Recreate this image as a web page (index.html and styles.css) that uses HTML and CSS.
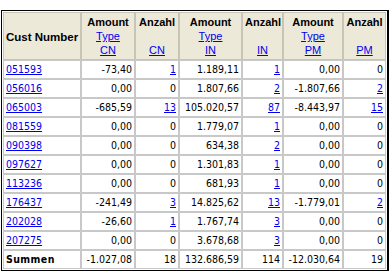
FILE: index.html
```html
<!DOCTYPE html>
<html>
<head>
<meta charset="utf-8">
<link rel="stylesheet" href="styles.css">
</head>
<body>
<div class="frame">
<table class="grid">
<colgroup>
<col class="c1"><col class="c2"><col class="c3"><col class="c4"><col class="c5"><col class="c6"><col class="c7">
</colgroup>
<thead>
<tr>
<th class="h-left">Cust Number</th>
<th>Amount<br><a href="#">Type</a><br><a href="#">CN</a></th>
<th>Anzahl<br><br><a href="#">CN</a></th>
<th>Amount<br><a href="#">Type</a><br><a href="#">IN</a></th>
<th>Anzahl<br><br><a href="#">IN</a></th>
<th>Amount<br><a href="#">Type</a><br><a href="#">PM</a></th>
<th>Anzahl<br><br><a href="#">PM</a></th>
</tr>
</thead>
<tbody>
<tr><td class="l"><a href="#">051593</a></td><td>-73,40</td><td><a href="#">1</a></td><td>1.189,11</td><td><a href="#">1</a></td><td>0,00</td><td>0</td></tr>
<tr><td class="l"><a href="#">056016</a></td><td>0,00</td><td>0</td><td>1.807,66</td><td><a href="#">2</a></td><td>-1.807,66</td><td><a href="#">2</a></td></tr>
<tr><td class="l"><a href="#">065003</a></td><td>-685,59</td><td><a href="#">13</a></td><td>105.020,57</td><td><a href="#">87</a></td><td>-8.443,97</td><td><a href="#">15</a></td></tr>
<tr><td class="l"><a href="#">081559</a></td><td>0,00</td><td>0</td><td>1.779,07</td><td><a href="#">1</a></td><td>0,00</td><td>0</td></tr>
<tr><td class="l"><a href="#">090398</a></td><td>0,00</td><td>0</td><td>634,38</td><td><a href="#">2</a></td><td>0,00</td><td>0</td></tr>
<tr><td class="l"><a href="#">097627</a></td><td>0,00</td><td>0</td><td>1.301,83</td><td><a href="#">1</a></td><td>0,00</td><td>0</td></tr>
<tr><td class="l"><a href="#">113236</a></td><td>0,00</td><td>0</td><td>681,93</td><td><a href="#">1</a></td><td>0,00</td><td>0</td></tr>
<tr><td class="l"><a href="#">176437</a></td><td>-241,49</td><td><a href="#">3</a></td><td>14.825,62</td><td><a href="#">13</a></td><td>-1.779,01</td><td><a href="#">2</a></td></tr>
<tr><td class="l"><a href="#">202028</a></td><td>-26,60</td><td><a href="#">1</a></td><td>1.767,74</td><td><a href="#">3</a></td><td>0,00</td><td>0</td></tr>
<tr><td class="l"><a href="#">207275</a></td><td>0,00</td><td>0</td><td>3.678,68</td><td><a href="#">3</a></td><td>0,00</td><td>0</td></tr>
<tr class="sum"><td class="l"><b>Summen</b></td><td>-1.027,08</td><td>18</td><td>132.686,59</td><td>114</td><td>-12.030,64</td><td>19</td></tr>
</tbody>
</table>
</div>
</body>
</html>
```
FILE: styles.css
```css
html, body {
  margin: 0;
  padding: 0;
  background: #ffffff;
}
body {
  padding: 10px 0 0 1px;
}
.frame {
  display: inline-block;
  border-top: 1px solid #000;
  border-left: 1px solid #000;
  border-right: 2px solid #000;
  border-bottom: 2px solid #000;
  padding: 1px;
}
.grid {
  border-collapse: separate;
  border-spacing: 0;
  table-layout: fixed;
  width: 383px;
  font-family: "DejaVu Sans Condensed", "DejaVu Sans", sans-serif;
  font-size: 10.5px;
  line-height: 13px;
  color: #000;
}
.c1 { width: 78px; }
.c2 { width: 54px; }
.c3 { width: 44px; }
.c4 { width: 63px; }
.c5 { width: 41px; }
.c6 { width: 60px; }
.c7 { width: 43px; }
.grid th {
  background: #ece9d8;
  border: 1px solid #c8c5b8;
  font-family: "Liberation Sans", Arial, sans-serif;
  font-size: 11px;
  font-weight: bold;
  line-height: 14px;
  height: 43px;
  padding: 2px 2px 1px;
  vertical-align: top;
  text-align: center;
  white-space: nowrap;
}
.grid th.h-left {
  text-align: left;
  vertical-align: middle;
  font-size: 11.5px;
}
.grid th a {
  font-weight: normal;
  color: #0000ee;
}
.grid td {
  border: 1px solid #c8c8c8;
  height: 17px;
  padding: 0 2px;
  text-align: right;
  white-space: nowrap;
  overflow: hidden;
}
.grid td.l {
  text-align: left;
}
.grid td a {
  color: #0000ee;
}
.sum td b {
  font-weight: bold;
  letter-spacing: 0.4px;
}
```
